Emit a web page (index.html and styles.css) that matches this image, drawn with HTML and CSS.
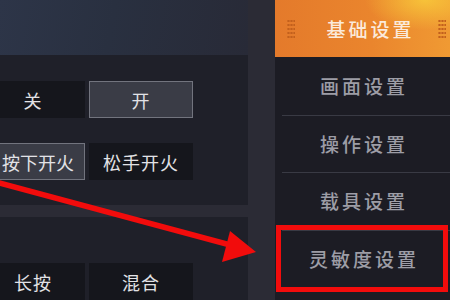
FILE: index.html
```html
<!DOCTYPE html>
<html lang="zh-CN">
<head>
    <meta charset="UTF-8">
    <title>基础设置</title>
    <link rel="stylesheet" href="styles.css">
</head>
<body>
    <div class="screen">
        <div class="main">
            <div class="top-bar"></div>

            <div class="panel panel-fire">
                <div class="btn-row">
                    <div class="opt-btn">关</div>
                    <div class="opt-btn active">开</div>
                </div>
                <div class="btn-row">
                    <div class="opt-btn active edge">按下开火</div>
                    <div class="opt-btn">松手开火</div>
                </div>
            </div>

            <div class="panel panel-mode">
                <div class="btn-row">
                    <div class="opt-btn">长按</div>
                    <div class="opt-btn">混合</div>
                </div>
            </div>
        </div>

        <nav class="menu">
            <div class="menu-tab">
                <span class="grip"></span>
                <span class="tab-label">基础设置</span>
                <span class="grip"></span>
            </div>
            <div class="menu-item">画面设置</div>
            <div class="menu-item">操作设置</div>
            <div class="menu-item">载具设置</div>
            <div class="menu-item">灵敏度设置</div>
        </nav>

        <div class="highlight-box"></div>

        <svg class="arrow" width="450" height="300" viewBox="0 0 450 300">
            <line x1="-4" y1="182" x2="234" y2="246" stroke="#f20c0c" stroke-width="5.5"/>
            <polygon points="256,252 230,231 222,262" fill="#f20c0c"/>
        </svg>
    </div>
</body>
</html>
```

FILE: styles.css
```css
body {
    margin: 0;
    background: #2b2b35;
    font-family: "Noto Sans CJK SC", "Noto Sans", sans-serif;
}

.screen {
    position: relative;
    display: flex;
    width: 450px;
    height: 300px;
    overflow: hidden;
    background: #2b2b35;
}

.main {
    width: 248px;
    display: flex;
    flex-direction: column;
    gap: 12px;
}

.top-bar {
    height: 57px;
    margin-bottom: -12px;
    background: linear-gradient(100deg, #2d3548 0%, #293040 45%, #282a37 100%);
}

.panel {
    background: #1f2029;
    display: flex;
    flex-direction: column;
    gap: 25px;
}

.panel-fire {
    height: 153px;
    box-sizing: border-box;
    padding-top: 26px;
}

.panel-mode {
    flex: 1;
    padding-top: 46px;
}

.btn-row {
    display: flex;
    gap: 4px;
    margin-left: -19px;
}

.opt-btn {
    width: 104px;
    height: 37px;
    box-sizing: border-box;
    display: flex;
    align-items: center;
    justify-content: center;
    background: #15161c;
    color: #e2e2e6;
    font-size: 18px;
    letter-spacing: 1px;
}

.opt-btn.active {
    background: #3a3c46;
    border: 1px solid #72747e;
}

.opt-btn.edge {
    padding-left: 10px;
    letter-spacing: 0;
}

.menu {
    width: 175px;
    margin-left: 27px;
    background: #1c1c24;
    display: flex;
    flex-direction: column;
}

.menu-tab {
    height: 57px;
    display: flex;
    align-items: center;
    justify-content: space-between;
    padding: 0 4px 0 12px;
    background:
        radial-gradient(ellipse 60px 30px at 150px 0, rgba(250, 210, 60, 0.75), rgba(250, 210, 60, 0) 100%),
        linear-gradient(90deg, #e47a2b 0%, #ea852d 55%, #f09a33 100%);
}

.tab-label {
    color: #fbeadb;
    font-size: 19px;
    font-weight: 500;
    letter-spacing: 3px;
    margin-left: 8px;
}

.grip {
    width: 8px;
    height: 20px;
    background-image: radial-gradient(circle, #c3601c 1px, transparent 1.3px);
    background-size: 3px 4px;
}

.menu-item {
    height: 57.5px;
    display: flex;
    align-items: center;
    justify-content: center;
    color: #9d9da6;
    font-size: 19px;
    font-weight: 500;
    letter-spacing: 3px;
    padding-left: 3px;
    background: linear-gradient(#393a44, #393a44) no-repeat 7px 0 / calc(100% - 7px) 1px;
}

.menu-item:nth-child(2) {
    background: none;
}

.highlight-box {
    position: absolute;
    left: 276px;
    top: 225px;
    width: 172px;
    height: 67px;
    box-sizing: border-box;
    border: 5px solid #f20c0c;
}

.arrow {
    position: absolute;
    left: 0;
    top: 0;
}
```
